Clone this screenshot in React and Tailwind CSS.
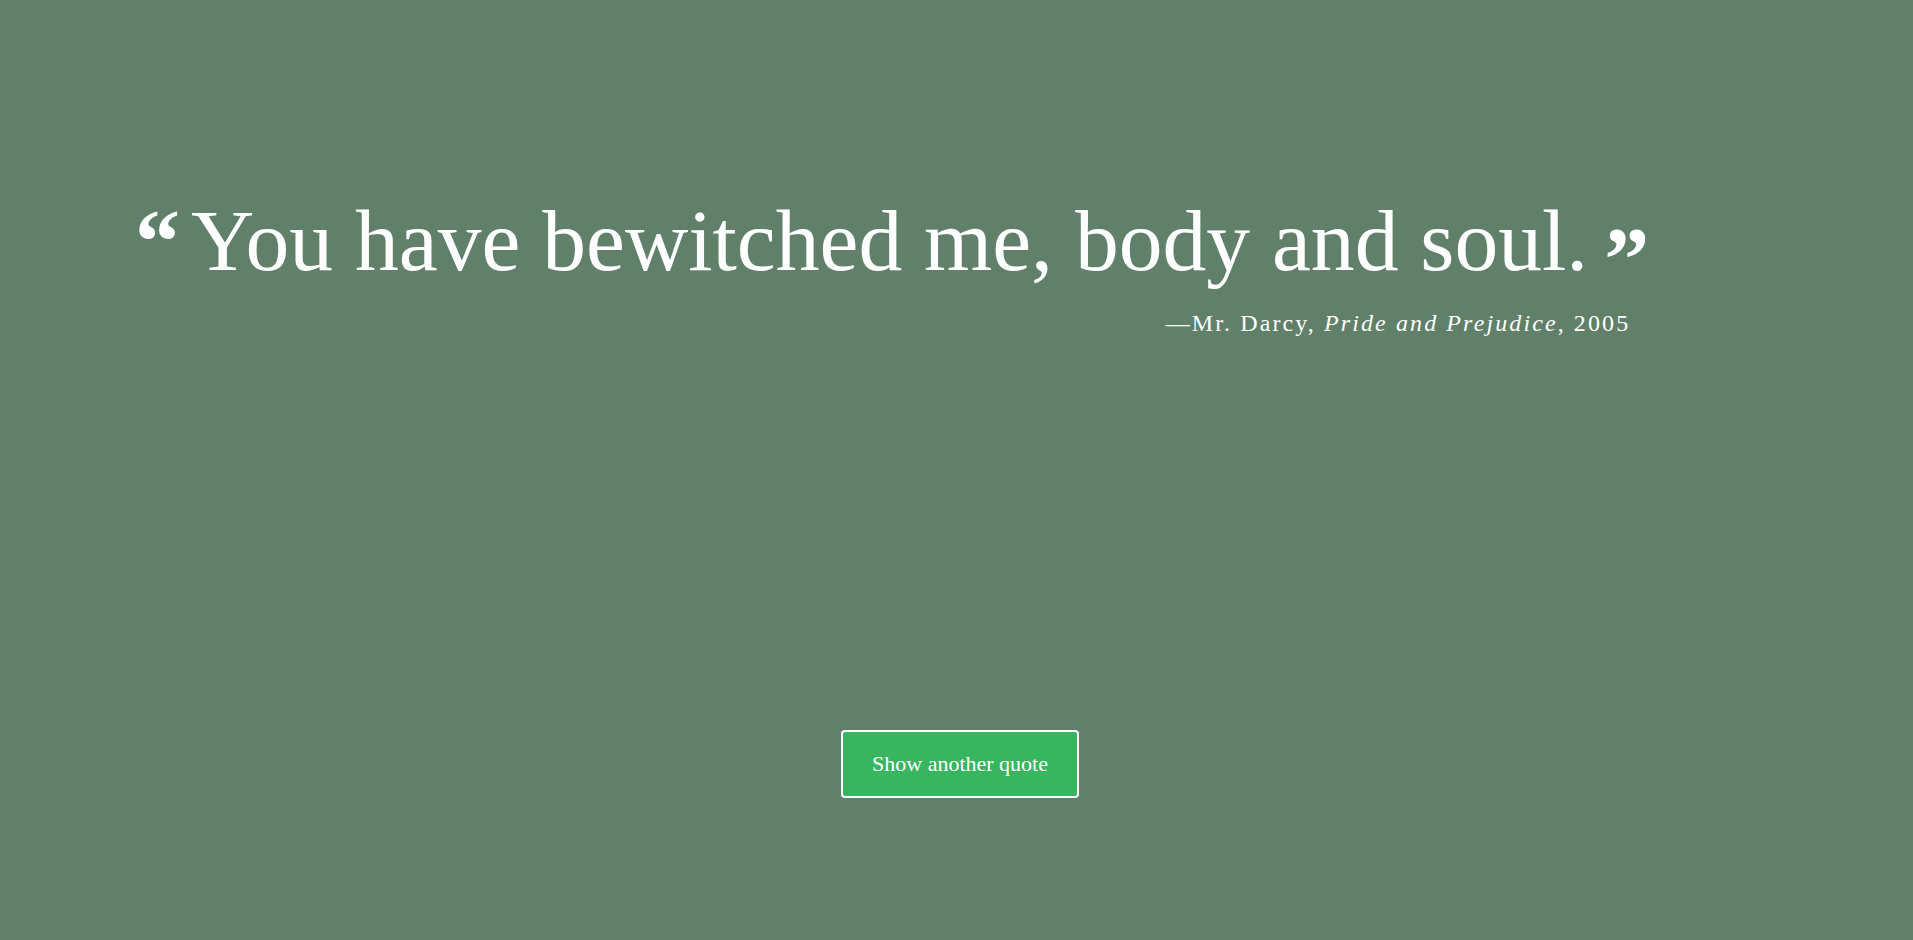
import React from "react";

const quote = {
  text: "You have bewitched me, body and soul.",
  who: "Mr. Darcy",
  film: "Pride and Prejudice",
  year: "2005",
};

const App = () => {
  return (
    <div className="min-h-screen bg-[#61806a] text-white font-['Liberation_Serif',serif]">
      <div className="flex pt-[197px] pl-[135px]">
        <div>
          <p className="flex items-start text-[87.6px] leading-none">
            <span className="font-bold text-[90px] leading-[0.8] mr-[11px] mt-[9px]">
              &ldquo;
            </span>
            <span>{quote.text}</span>
            <span className="font-bold text-[90px] leading-[0.8] ml-[16px] mt-[9px] translate-y-[18px]">
              &rdquo;
            </span>
          </p>
          <p className="mt-[20px] pr-[19px] text-right text-[24px] tracking-[2.1px]">
            &mdash;{quote.who}, <em>{quote.film}</em>, {quote.year}
          </p>
        </div>
      </div>

      <div className="flex justify-center pt-[389px] pl-[7px]">
        <button className="w-[238px] h-[68px] rounded-[4px] border-2 border-white bg-[#37b55f] text-[22px] text-white">
          Show another quote
        </button>
      </div>
    </div>
  );
};

export default App;
